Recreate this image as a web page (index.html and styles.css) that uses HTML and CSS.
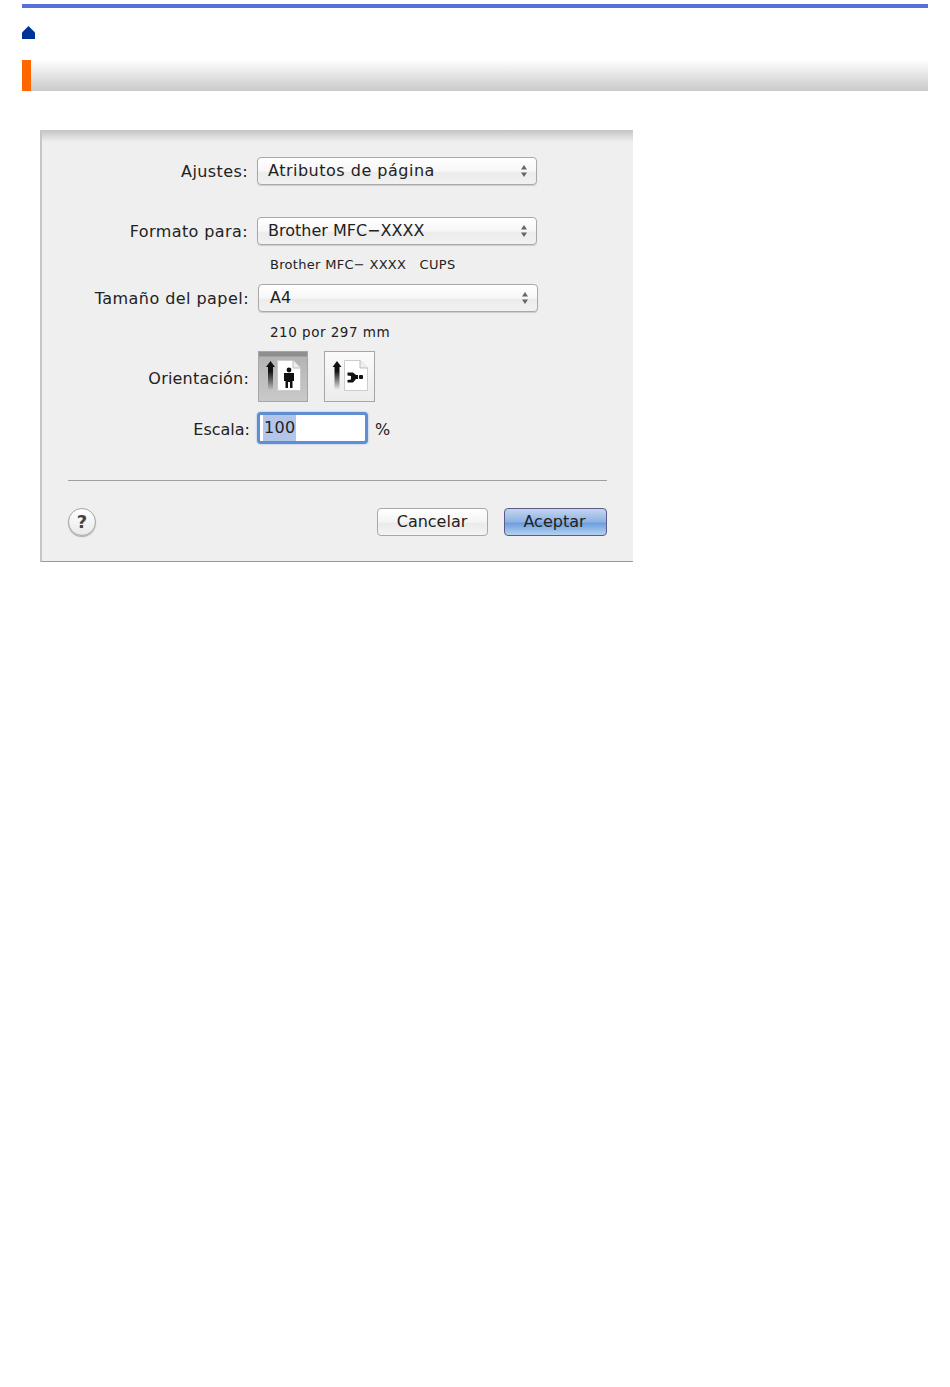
FILE: index.html
```html
<!DOCTYPE html>
<html lang="es">

<head>
    <meta charset="UTF-8">
    <meta name="viewport" content="width=device-width, initial-scale=1.0">
    <title>Ajustes de página</title>
    <link rel="stylesheet" href="styles.css">
</head>

<body>

    <div class="top-rule"></div>

    <a class="home-link" href="#" aria-label="Inicio">
        <svg width="13" height="13" viewBox="0 0 13 13">
            <path d="M6.5 0 L13 6.5 L13 13 L0 13 L0 6.5 Z" fill="#003399" />
        </svg>
    </a>

    <div class="title-bar"><span class="title-mark"></span></div>

    <!-- Page setup dialog -->
    <div class="dialog">

        <div class="row row-settings">
            <label class="row-label">Ajustes:</label>
            <div class="select select-wide">
                <span>Atributos de página</span>
                <svg class="stepper" width="8" height="14" viewBox="0 0 8 14">
                    <path d="M4 1 L7 5.5 L1 5.5 Z M4 13 L7 8.5 L1 8.5 Z" fill="#666" />
                </svg>
            </div>
        </div>

        <div class="row row-format">
            <label class="row-label">Formato para:</label>
            <div class="select">
                <span>Brother MFC−XXXX</span>
                <svg class="stepper" width="8" height="14" viewBox="0 0 8 14">
                    <path d="M4 1 L7 5.5 L1 5.5 Z M4 13 L7 8.5 L1 8.5 Z" fill="#666" />
                </svg>
            </div>
        </div>
        <p class="note note-printer">Brother MFC− XXXX&nbsp;&nbsp; CUPS</p>

        <div class="row row-paper">
            <label class="row-label">Tamaño del papel:</label>
            <div class="select select-paper">
                <span>A4</span>
                <svg class="stepper" width="8" height="14" viewBox="0 0 8 14">
                    <path d="M4 1 L7 5.5 L1 5.5 Z M4 13 L7 8.5 L1 8.5 Z" fill="#666" />
                </svg>
            </div>
        </div>
        <p class="note note-size">210 por 297 mm</p>

        <div class="row row-orientation">
            <label class="row-label">Orientación:</label>
            <div class="orientation-btn active">
                <svg width="48" height="49" viewBox="0 0 48 49">
                    <defs>
                        <linearGradient id="fade1" x1="0" y1="0" x2="0" y2="1">
                            <stop offset="0.35" stop-color="#111" />
                            <stop offset="1" stop-color="#111" stop-opacity="0" />
                        </linearGradient>
                    </defs>
                    <path d="M11.5 9 L16 15 L14 15 L14 38 L9 38 L9 15 L7 15 Z" fill="url(#fade1)" />
                    <path d="M18.5 8.5 L34 8.5 L41.5 16 L41.5 38.5 L18.5 38.5 Z" fill="#fff" stroke="#ccc" />
                    <path d="M34 8.5 L34 16 L41.5 16" fill="#eee" stroke="#bbb" />
                    <circle cx="30" cy="18" r="2.4" fill="#111" />
                    <path d="M25 21 L35 21 L35 29 L33.5 29 L33.5 36 L31 36 L31 30 L29 30 L29 36 L26.5 36 L26.5 29 L25 29 Z" fill="#111" />
                </svg>
            </div>
            <div class="orientation-btn">
                <svg width="49" height="49" viewBox="0 0 49 49">
                    <defs>
                        <linearGradient id="fade2" x1="0" y1="0" x2="0" y2="1">
                            <stop offset="0.35" stop-color="#111" />
                            <stop offset="1" stop-color="#111" stop-opacity="0" />
                        </linearGradient>
                    </defs>
                    <path d="M12 9 L16.5 15 L14.5 15 L14.5 38 L9.5 38 L9.5 15 L7.5 15 Z" fill="url(#fade2)" />
                    <path d="M19.5 8.5 L35 8.5 L42.5 16 L42.5 38.5 L19.5 38.5 Z" fill="#fff" stroke="#ccc" />
                    <path d="M35 8.5 L35 16 L42.5 16" fill="#eee" stroke="#bbb" />
                    <path d="M22.5 20.5 L28 20.5 L31 23 L33 23 L33 27 L31 27 L28 30.5 L22.5 30.5 L22.5 28 L26 27.5 L26 24 L22.5 23.5 Z" fill="#111" />
                    <rect x="34" y="23" width="4" height="4" rx="1" fill="#111" />
                </svg>
            </div>
        </div>

        <div class="row row-scale">
            <label class="row-label">Escala:</label>
            <div class="scale-input"><span class="selected-text">100</span></div>
            <span class="percent">%</span>
        </div>

        <div class="separator"></div>

        <div class="dialog-footer">
            <div class="help-btn">?</div>
            <div class="footer-buttons">
                <div class="btn">Cancelar</div>
                <div class="btn btn-primary">Aceptar</div>
            </div>
        </div>

    </div>

</body>

</html>
```

FILE: styles.css
```css
body {
    font-family: 'DejaVu Sans', Verdana, sans-serif;
    margin: 0;
    padding: 4px 22px 0;
    background-color: #fff;
    color: #222;
}

.top-rule {
    height: 4px;
    background-color: #5b6fd8;
}

.home-link {
    display: block;
    height: 13px;
    margin-top: 18px;
}

.home-link svg {
    display: block;
}

/* Title band */
.title-bar {
    height: 31px;
    margin-top: 21px;
    background: linear-gradient(to bottom, #fff, #c9c9c9);
}

.title-mark {
    display: block;
    width: 9px;
    height: 31px;
    background-color: #ff6600;
}

/* Dialog */
.dialog {
    width: 591px;
    height: 430px;
    margin: 39px 0 0 18px;
    padding-top: 1px;
    background: linear-gradient(to bottom, #c4c4c4, #efefef 12px);
    border-left: 2px solid #c6c6c6;
    border-bottom: 1px solid #999;
    font-size: 16px;
}

.row {
    display: flex;
    align-items: center;
}

.row-label {
    width: 206px;
    text-align: right;
    margin-right: 9px;
    white-space: nowrap;
    letter-spacing: 0.4px;
}

.row-settings {
    margin-top: 26px;
}

.row-format {
    margin-top: 32px;
}

.row-paper {
    margin-top: 11px;
}

.row-orientation {
    margin-top: 11px;
}

.row-scale {
    margin-top: 10px;
}

.row-orientation .row-label {
    width: 207px;
    margin-right: 8px;
    padding-top: 4px;
    letter-spacing: 0.2px;
}

.row-scale .row-label {
    width: 208px;
    margin-right: 7px;
    padding-top: 2px;
    letter-spacing: 0;
}

.row-paper .row-label {
    width: 207px;
    margin-right: 8px;
    letter-spacing: 0.45px;
}

.select {
    position: relative;
    width: 278px;
    height: 26px;
    border: 1px solid #a9a9a9;
    border-radius: 4px;
    background: linear-gradient(to bottom, #fff, #f7f7f7 50%, #ececec 55%, #f1f1f1);
    line-height: 26px;
    box-shadow: 0 1px 1px rgba(0, 0, 0, 0.15);
}

.select span {
    margin-left: 10px;
    white-space: nowrap;
}

.select-wide span {
    letter-spacing: 0.5px;
}

.select-paper {
    margin-left: 1px;
}

.select-paper span {
    margin-left: 11px;
}

.stepper {
    position: absolute;
    right: 8px;
    top: 6px;
}

.note {
    margin: 0 0 0 228px;
    font-size: 13px;
    line-height: 16px;
}

.note-printer {
    margin-top: 12px;
    letter-spacing: 0.3px;
}

.note-size {
    margin-top: 12px;
    font-size: 13.5px;
    letter-spacing: 0.5px;
}

.orientation-btn {
    width: 48px;
    height: 49px;
    margin-left: 1px;
    margin-right: 15px;
    border: 1px solid #a6a6a6;
    background: linear-gradient(to bottom, #fafafa, #ececec);
}

.orientation-btn + .orientation-btn {
    width: 49px;
}

.orientation-btn svg {
    display: block;
}

.orientation-btn.active {
    background: linear-gradient(to bottom, #8e8e8e, #8e8e8e 4px, #b4b4b4 5px, #c9c9c9);
}

.scale-input {
    width: 105px;
    height: 26px;
    border: 3px solid #5f8fd2;
    border-radius: 4px;
    background-color: #fff;
    line-height: 26px;
    box-shadow: 0 0 2px rgba(95, 143, 210, 0.7);
}

.selected-text {
    display: inline-block;
    margin-left: 3px;
    padding: 0 1px;
    background-color: #b3c6ea;
    letter-spacing: 0.3px;
}

.percent {
    margin-left: 7px;
    padding-top: 2px;
}

.separator {
    height: 1px;
    margin: 36px 26px 0 26px;
    background-color: #a0a0a0;
}

.dialog-footer {
    display: flex;
    justify-content: space-between;
    align-items: center;
    margin: 27px 26px 0 26px;
}

.help-btn {
    width: 26px;
    height: 26px;
    border: 1px solid #a5a5a5;
    border-radius: 50%;
    background: linear-gradient(to bottom, #fff, #e9e9e9);
    text-align: center;
    line-height: 26px;
    font-weight: bold;
    font-size: 18px;
    color: #444;
    box-shadow: 0 1px 1px rgba(0, 0, 0, 0.3);
}

.footer-buttons {
    display: flex;
    gap: 16px;
}

.btn {
    width: 108px;
    height: 26px;
    padding-right: 1px;
    border: 1px solid #a8a8a8;
    border-radius: 4px;
    background: linear-gradient(to bottom, #fff, #f4f4f4 50%, #ebebeb 55%, #f4f4f4);
    text-align: center;
    line-height: 26px;
}

.btn-primary {
    width: 99px;
    padding-right: 2px;
    border-color: #5a5a8c;
    background: linear-gradient(to bottom, #c4d5ee, #8fb4e4 48%, #6e9fdc 55%, #b5d2f2);
}
```
